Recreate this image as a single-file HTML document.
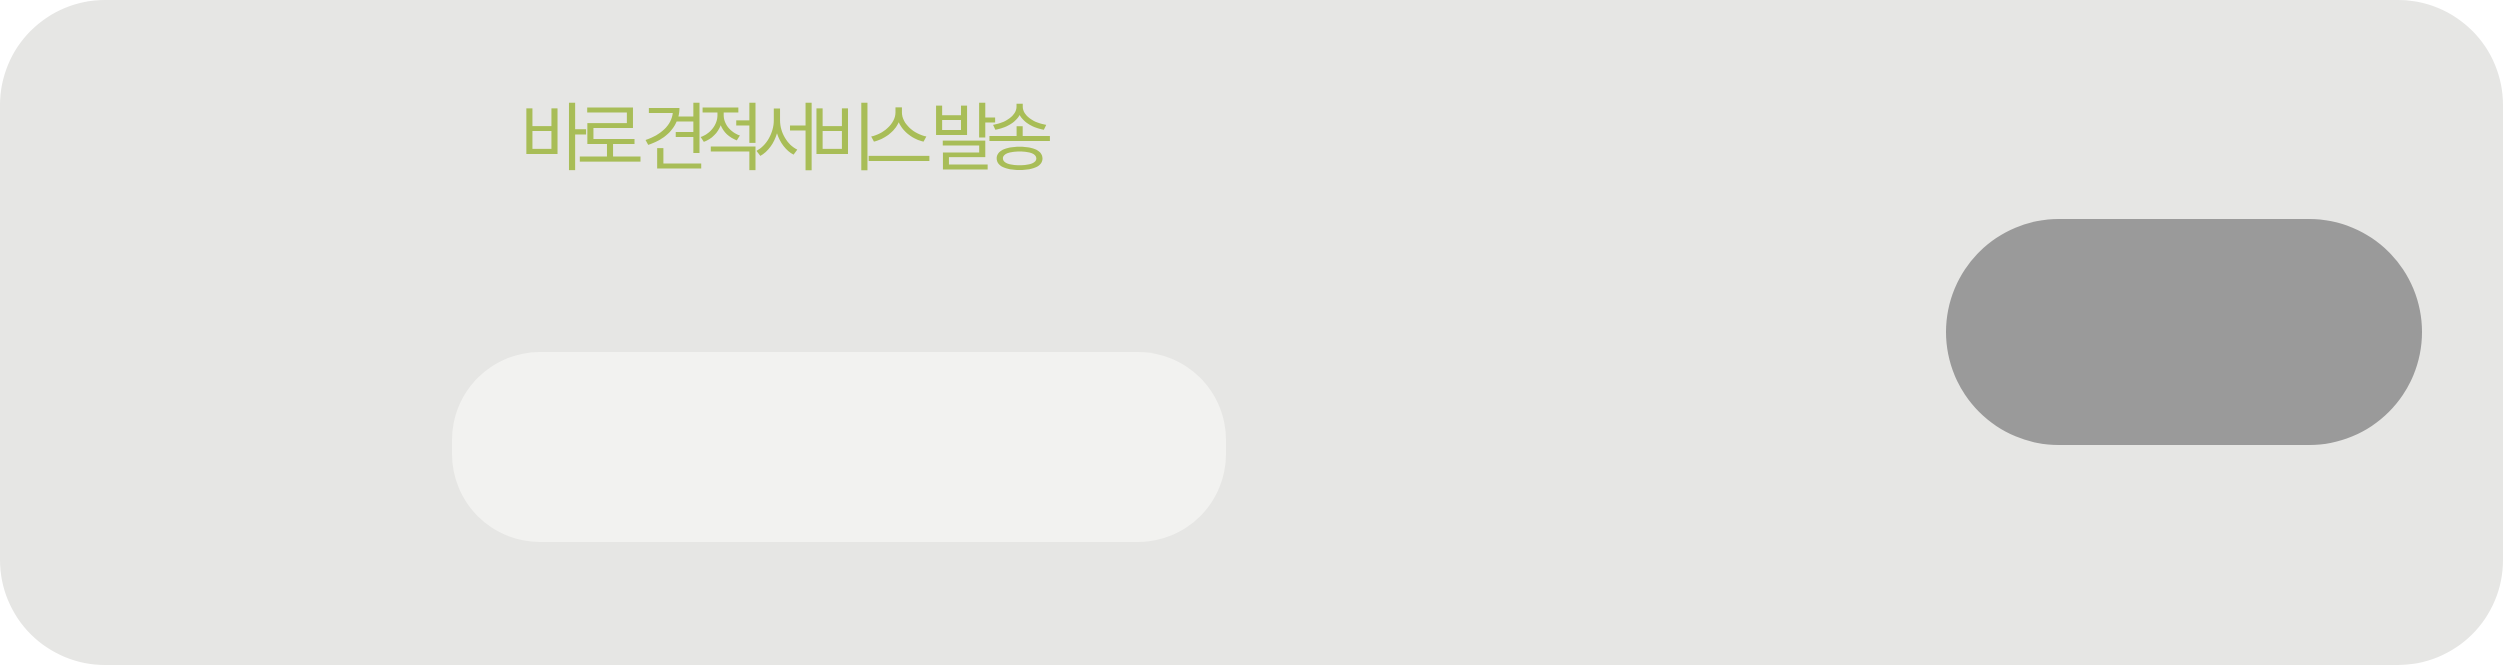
<!DOCTYPE html>
<html><head><meta charset="utf-8"><style>
html,body{margin:0;padding:0;background:#fff;}
body{width:2503px;height:665px;position:relative;overflow:hidden;}
.panel{position:absolute;left:0;top:0;width:2503px;height:665px;background:#e6e6e4;border-radius:105px;}
.title{position:absolute;left:520px;top:102px;font-family:"Liberation Sans","Noto Sans CJK KR",sans-serif;font-size:74px;line-height:74px;color:#a8bd57;letter-spacing:-12px;white-space:nowrap;}
.light{position:absolute;left:452px;top:352px;width:774px;height:190px;background:#f2f2f0;border-radius:88px;}
.pill{position:absolute;left:1946px;top:219px;width:476px;height:226px;background:#9a9a9a;border-radius:113px;}
</style></head><body>
<div class="panel"></div>
<div class="title">바로 견적서비스 발송</div>
<div class="light"></div>
<div class="pill"></div>
</body></html>
